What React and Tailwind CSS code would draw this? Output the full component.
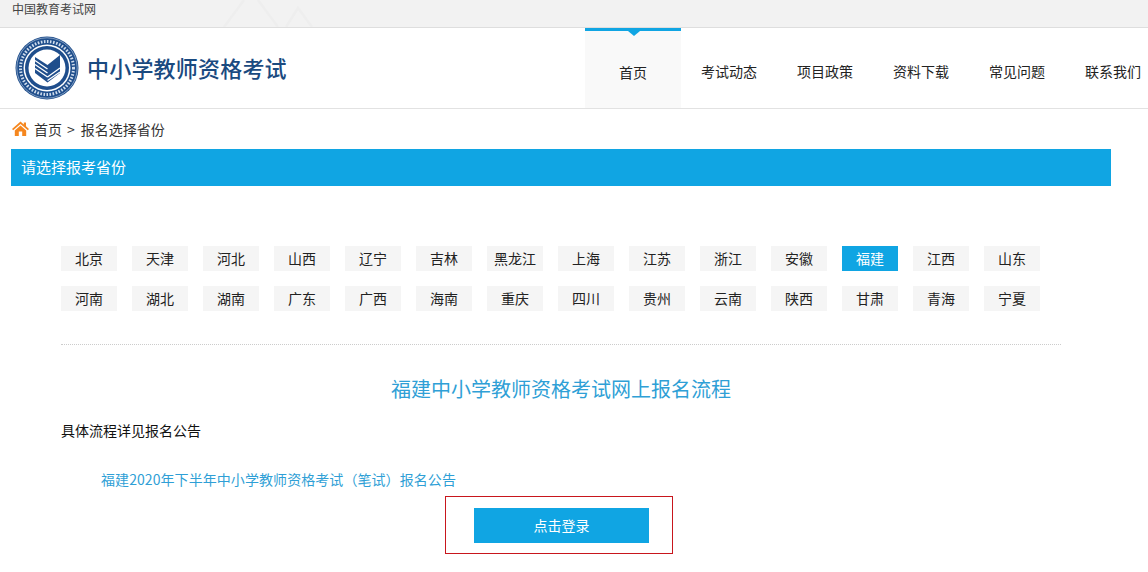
const row1 = ["北京","天津","河北","山西","辽宁","吉林","黑龙江","上海","江苏","浙江","安徽","福建","江西","山东"];
const row2 = ["河南","湖北","湖南","广东","广西","海南","重庆","四川","贵州","云南","陕西","甘肃","青海","宁夏"];
const nav = ["首页","考试动态","项目政策","资料下载","常见问题","联系我们"];

function Logo() {
  return (
    <svg width="64" height="64" viewBox="0 0 64 64" className="shrink-0">
      <circle cx="32" cy="32" r="31.5" fill="#1f4e8c" />
      <circle cx="32" cy="32" r="30.2" fill="none" stroke="#dfe8f2" strokeWidth="0.5" />
      <circle cx="32" cy="32" r="26.5" fill="none" stroke="#cfdcec" strokeWidth="3" strokeDasharray="1.6 1.5" />
      <circle cx="32" cy="32" r="23.5" fill="#fff" />
      <circle cx="32" cy="32" r="22" fill="#1f4e8c" />
      <circle cx="32" cy="32" r="18.5" fill="#fff" />
      <path d="M20 21L32.5 29L45 19V37L32.5 46.5L20 37Z" fill="#1f4e8c" />
      <path d="M20 24.5L32.5 33M20 28.5L32.5 37M20 32.5L32.5 41M45 32L32.5 41M45 36L32.5 44.5" stroke="#fff" strokeWidth="1.3" fill="none" />
    </svg>
  );
}

function Province({ name, active }) {
  return (
    <a className={"w-14 h-[25px] flex items-center justify-center text-sm pb-[1px] " + (active ? "bg-[#10a5e3] text-white" : "bg-[#f5f5f5] text-[#222]")}>{name}</a>
  );
}

export default function App() {
  return (
    <div className="w-[1148px] h-[572px] overflow-hidden bg-white text-[#222] font-['Microsoft_YaHei','Noto_Sans_CJK_SC',sans-serif]">
      <div className="relative h-7 bg-[#f2f2f2] border-b border-[#dedede] pl-3 text-xs leading-[18px] text-[#444]">
        中国教育考试网
        <svg width="130" height="27" viewBox="0 0 130 27" className="absolute left-[200px] top-0">
          <path d="M24 27L44 0M58 0L78 27M86 27L98 8L112 27" stroke="#eeeeee" strokeWidth="2.5" fill="none" />
        </svg>
      </div>
      <div className="h-[81px] border-b border-[#e2e2e2] flex overflow-hidden">
        <div className="w-[585px] flex items-center pl-[15px] gap-2 shrink-0">
          <Logo />
          <span className="text-[22px] font-medium tracking-[0.2px] text-[#1a4a80] -mt-[2px]">中小学教师资格考试</span>
        </div>
        {nav.map((n, i) => (
          <a key={n} className={"relative w-24 shrink-0 flex items-center justify-center text-sm text-[#222] pt-[5px] " + (i === 0 ? "bg-[#f9f9f9] border-t-[3px] border-[#10a5e3]" : "")}>
            {n}
            {i === 0 && <span className="absolute top-0 left-[43px] border-x-[6px] border-t-[5px] border-x-transparent border-t-[#10a5e3]" />}
          </a>
        ))}
      </div>
      <div className="h-10 flex items-center pl-3 text-sm text-[#333]">
        <svg width="17" height="15" viewBox="0 0 17 15" className="mr-[5px] -mt-[1px]">
          <path d="M8.5 0.5L0 8l1.2 1.3L8.5 3l7.3 6.3L17 8l-3-2.7V1.5h-2.2v1.9z" fill="#f5871f" />
          <path d="M8.5 4.5L2.8 9.4V15h4V10.5h3.4V15h4V9.4z" fill="#f5871f" />
        </svg>
        首页<span className="ml-[5px] mr-[6px]">&gt;</span>报名选择省份
      </div>
      <div className="ml-[11px] w-[1100px] h-[37px] bg-[#10a5e3] text-white text-[15px] flex items-center pl-[10px]">请选择报考省份</div>
      <div className="pl-[61px] pt-[60px] w-[1122px]">
        <div className="flex gap-[15px]">
          {row1.map((p) => <Province key={p} name={p} active={p === "福建"} />)}
        </div>
        <div className="flex gap-[15px] mt-[15px]">
          {row2.map((p) => <Province key={p} name={p} />)}
        </div>
        <div className="w-[1000px] border-t border-dotted border-[#ccc] mt-[33px]" />
        <h2 className="w-[1000px] text-center text-xl leading-7 text-[#2f9fd6] mt-[30px]">福建中小学教师资格考试网上报名流程</h2>
        <p className="text-sm leading-5 text-[#111] mt-[17px]">具体流程详见报名公告</p>
        <a className="block pl-10 text-sm leading-5 tracking-[0.07px] text-[#2f9fd6] mt-[29px]">福建2020年下半年中小学教师资格考试（笔试）报名公告</a>
        <div className="ml-[384px] mt-[7px] w-[228px] h-[58px] border border-[#c8161d] flex items-center pl-[28px]">
          <a className="w-[175px] h-[35px] bg-[#10a5e3] text-white text-sm flex items-center justify-center">点击登录</a>
        </div>
      </div>
    </div>
  );
}
